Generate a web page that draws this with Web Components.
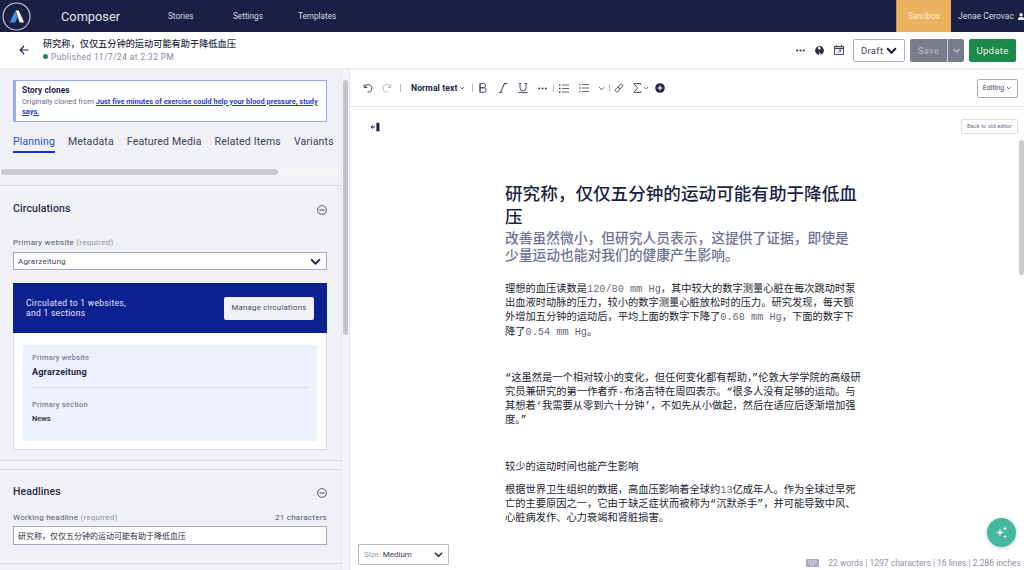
<!DOCTYPE html>
<html lang="zh">
<head>
<meta charset="utf-8">
<title>Composer</title>
<style>
  html, body { margin: 0; height: 100%; overflow: hidden; }
  body { font-family: Roboto, "Noto Sans CJK SC", sans-serif; color: #1a1f44; background: #fff; }
</style>
</head>
<body>
<composer-app></composer-app>
<script>
const CHEVRON = (size, width = 2, color = 'currentColor') => `<svg width="${size}" height="${size}" viewBox="0 0 12 12" fill="none" stroke="${color}" stroke-width="${width}"><path d="M2 4l4 4 4-4"/></svg>`;

class AppTopbar extends HTMLElement {
  constructor() {
    super();
    this.shadowDOM = this.attachShadow({mode: 'open'});
  }

  connectedCallback() {
    this.shadowDOM.innerHTML = `
    <style>
      :host { display: flex; height: 32px; background: #1a1f44; color: #d5d7e2; align-items: center; font-size: 8.2px; }
      .logo { display: block; margin-left: 2px; width: 29px; height: 29px; }
      .brand { margin-left: 30px; width: 107px; font-size: 12.8px; color: #e3e4ec; }
      nav { display: flex; flex: 1; }
      nav span { width: 65px; }
      .sandbox { width: 55px; height: 32px; background: #ebb25f; color: #fbeacf; display: flex; align-items: center; justify-content: center; border-left: 1px solid #c4954f; box-sizing: border-box; }
      .user { display: flex; align-items: center; width: 73px; padding-left: 7px; box-sizing: border-box; gap: 4px; white-space: nowrap; font-size: 8.5px; }
    </style>
    <svg class="logo" viewBox="0 0 29 29">
      <circle cx="14.5" cy="14.5" r="13.5" fill="none" stroke="#c9ccd8" stroke-width="1.1"/>
      <path d="M13.2 8.5L7.6 20.5h5.6l2.2-5z" fill="#3f8fe0"/>
      <path d="M13.6 8.5h3.2l5.4 12h-4.6z" fill="#f2f4f8"/>
    </svg>
    <span class="brand">Composer</span>
    <nav><span>Stories</span><span>Settings</span><span>Templates</span></nav>
    <div class="sandbox">Sandbox</div>
    <div class="user">Jenae Cerovac
      <svg width="8" height="9" viewBox="0 0 8 9" fill="#eceef4"><circle cx="4" cy="2.2" r="2.2"/><path d="M0 9V7.4C0 5.8 1.6 5 4 5s4 .8 4 2.4V9z"/></svg>
    </div>
    `;
  }
}

class StoryHeader extends HTMLElement {
  constructor() {
    super();
    this.shadowDOM = this.attachShadow({mode: 'open'});
  }

  connectedCallback() {
    this.shadowDOM.innerHTML = `
    <style>
      :host { display: flex; height: 36px; background: #fff; align-items: center; border-bottom: 2px solid #eeeff3; }
      .back { margin-left: 19px; width: 24px; display: block; }
      .meta { flex: 1; }
      .title { font-size: 9.2px; font-weight: 500; line-height: 13px; color: #2a2d45; margin-top: -1px; }
      .status { display: flex; align-items: center; font-size: 8.2px; line-height: 12px; color: #84869b; letter-spacing: .5px; margin-top: 1px; }
      .dot { width: 5px; height: 5px; border-radius: 50%; background: #1b8a4b; margin: 0 3px 0 0; }
      .tools { display: flex; align-items: center; padding-right: 8px; }
      .tools svg { display: block; }
      .draft { box-sizing: border-box; margin-left: 9px; width: 52px; height: 23px; border: 1px solid #aeb0c0; border-radius: 2px; display: flex; align-items: center; justify-content: space-between; padding: 0 6px 0 7px; font-size: 9.5px; color: #3e4059; letter-spacing: .3px; }
      .save { margin-left: 5px; height: 23px; display: flex; background: #7a7c8b; border-radius: 2px; color: #b9bac4; font-size: 9.5px; letter-spacing: .3px; }
      .save span { width: 37px; display: flex; align-items: center; justify-content: center; border-right: 1px solid #cfd0d7; }
      .save i { width: 16px; display: flex; align-items: center; justify-content: center; color: #c3c4cd; }
      .update { margin-left: 5px; width: 47px; height: 23px; background: #1b8a4b; color: #e8f4ec; border-radius: 2px; display: flex; align-items: center; justify-content: center; font-size: 9.5px; letter-spacing: .3px; }
    </style>
    <svg class="back" width="24" height="12" viewBox="0 0 24 12" fill="none" stroke="#1a1f44" stroke-width="1.1"><path d="M9.5 6H1.2M5 2L1.2 6 5 10"/></svg>
    <div class="meta">
      <div class="title">研究称，仅仅五分钟的运动可能有助于降低血压</div>
      <div class="status"><span class="dot"></span>Published 11/7/24 at 2:32 PM</div>
    </div>
    <div class="tools">
      <svg width="9" height="3" viewBox="0 0 9 3" fill="#2a2d45"><circle cx="1.2" cy="1.5" r="1.1"/><circle cx="4.5" cy="1.5" r="1.1"/><circle cx="7.8" cy="1.5" r="1.1"/></svg>
      <svg style="margin-left:10px" width="9" height="9" viewBox="0 0 9 9"><circle cx="4.5" cy="4.5" r="4.4" fill="#2a2d45"/><path d="M3.4 0L6 2.2 4.6 3.8 2.9 3zM4.5 6.3l1.2 1L5 9H4z" fill="#fff"/></svg>
      <svg style="margin-left:10px" width="10" height="10" viewBox="0 0 10 10" fill="none" stroke="#3e4059"><rect x=".5" y="1.5" width="9" height="8" stroke-width=".9"/><path d="M.5 3.4h9" stroke-width="1.4"/><path d="M2.5 0v2M7.5 0v2" stroke-width="1"/><path d="M3.5 7.8L6.8 5M5 5h1.8v1.8" stroke-width=".8"/></svg>
      <div class="draft">Draft ${CHEVRON(13, 2, '#1a1f44')}</div>
      <div class="save"><span>Save</span><i>${CHEVRON(9, 1.6)}</i></div>
      <div class="update">Update</div>
    </div>
    `;
  }
}

class CloneNotice extends HTMLElement {
  constructor() {
    super();
    this.shadowDOM = this.attachShadow({mode: 'open'});
  }

  connectedCallback() {
    this.shadowDOM.innerHTML = `
    <style>
      :host { display: block; box-sizing: border-box; height: 42px; margin: 10px 14px 0 13px; background: #fff; border: 1px solid #9cabf2; border-left-width: 3px; padding: 3px 6px 0 6px; font-size: 7.4px; line-height: 9.5px; color: #6b6d82; }
      b { display: block; font-size: 8.3px; line-height: 12px; color: #23264a; font-weight: 700; margin-bottom: 1px; letter-spacing: .1px; }
      a { color: #2c3fd0; font-weight: 700; text-decoration: underline; }
    </style>
    <b>Story clones</b>
    Originally cloned from <a>Just five minutes of exercise could help your blood pressure, study says.</a>
    `;
  }
}

class TabBar extends HTMLElement {
  constructor() {
    super();
    this.shadowDOM = this.attachShadow({mode: 'open'});
  }

  connectedCallback() {
    this.shadowDOM.innerHTML = `
    <style>
      :host { display: flex; margin: 11px 0 0 13px; gap: 13px; font-size: 10.5px; color: #3e4059; white-space: nowrap; letter-spacing: .15px; }
      span { display: block; padding: 2px 0 3px; height: 13px; line-height: 13px; border-bottom: 2px solid transparent; }
      .active { color: #2a50c8; border-bottom-color: #1330d0; }
    </style>
    <span class="active">Planning</span><span>Metadata</span><span>Featured Media</span><span>Related Items</span><span>Variants</span>
    `;
  }
}

class PanelSection extends HTMLElement {
  constructor() {
    super();
    this.shadowDOM = this.attachShadow({mode: 'open'});
  }

  connectedCallback() {
    const title = this.getAttribute('title');
    this.removeAttribute('title');
    this.shadowDOM.innerHTML = `
    <style>
      :host { display: block; border-top: 1px solid #d9dbe4; padding: 15px 14px 0 13px; }
      header { display: flex; justify-content: space-between; align-items: center; height: 14px; font-size: 10.5px; font-weight: 500; color: #2a2d45; letter-spacing: .1px; }
      svg { display: block; margin-top: 4px; }
    </style>
    <header>${title}
      <svg width="10" height="10" viewBox="0 0 10 10" fill="none" stroke="#4a4c63" stroke-width=".9"><circle cx="5" cy="5" r="4.4"/><path d="M2.5 5h5" stroke-width="1.1"/></svg>
    </header>
    <slot></slot>
    `;
  }
}

class FieldLabel extends HTMLElement {
  constructor() {
    super();
    this.shadowDOM = this.attachShadow({mode: 'open'});
  }

  connectedCallback() {
    this.shadowDOM.innerHTML = `
    <style>
      :host { display: flex; justify-content: space-between; font-size: 8px; line-height: 11px; color: #53556b; letter-spacing: .25px; }
      i { font-style: normal; color: #8f91a4; }
    </style>
    <span>${this.getAttribute('text')} <i>(required)</i></span><span>${this.getAttribute('note') || ''}</span>
    `;
  }
}

class CirculationsCard extends HTMLElement {
  constructor() {
    super();
    this.shadowDOM = this.attachShadow({mode: 'open'});
  }

  connectedCallback() {
    this.shadowDOM.innerHTML = `
    <style>
      :host { display: block; margin-top: 13px; background: #fff; border: 1px solid #d8dae4; border-top: 0; height: 167px; box-sizing: border-box; }
      .banner { margin: 0 -1px; height: 50px; box-sizing: border-box; background: #0c2090; color: #e6e9f6; display: flex; align-items: center; justify-content: space-between; padding: 0 13px; font-size: 8.5px; line-height: 10px; letter-spacing: .3px; }
      .banner button { all: unset; box-sizing: border-box; width: 90px; height: 23px; background: #f0f1f6; border-radius: 2px; color: #4a4c63; font-size: 7.8px; text-align: center; letter-spacing: .25px; }
      .inner { margin: 12px 9px 0; height: 96px; box-sizing: border-box; background: #ecf1fd; padding: 8px 9px; }
      .label { font-size: 7.5px; line-height: 10px; font-weight: 500; color: #7b7e99; letter-spacing: .2px; }
      .site { font-size: 9px; font-weight: 700; color: #23264a; line-height: 12px; margin-top: 3px; letter-spacing: .2px; }
      hr { border: 0; border-top: 1px solid #d7dbe8; margin: 9px 0 12px; }
      .news { font-size: 7.5px; font-weight: 700; color: #3e4059; line-height: 10px; margin-top: 4px; }
    </style>
    <div class="banner"><span>Circulated to 1 websites,<br>and 1 sections</span><button>Manage circulations</button></div>
    <div class="inner">
      <div class="label">Primary website</div>
      <div class="site">Agrarzeitung</div>
      <hr>
      <div class="label">Primary section</div>
      <div class="news">News</div>
    </div>
    `;
  }
}

class SidePanel extends HTMLElement {
  constructor() {
    super();
    this.shadowDOM = this.attachShadow({mode: 'open'});
  }

  connectedCallback() {
    this.shadowDOM.innerHTML = `
    <style>
      :host { display: flex; flex: none; width: 350px; height: 500px; background: #f0f1f6; overflow: hidden; border-right: 1px solid #e3e4ea; box-sizing: border-box; }
      .content { width: 341px; flex: none; }
      .track { flex: 1; background: #f3f4f7; border-left: 1px solid #e6e7ec; padding: 10px 1px 0; }
      .track div { height: 255px; background: #c4c5ca; border-radius: 3px; }
      .hscroll { margin-top: 14px; height: 10px; background: #f5f6f8; padding: 2px 0 0 1px; box-sizing: border-box; }
      .hscroll div { width: 277px; height: 6px; background: #c9cad0; border-radius: 3px; }
      .circ { margin-top: 8px; height: 275px; box-sizing: border-box; }
      .select { box-sizing: border-box; margin-top: 4px; height: 18px; background: #fff; border: 1px solid #a9abbd; display: flex; align-items: center; justify-content: space-between; padding: 0 4px; font-size: 8px; color: #3e4059; letter-spacing: .2px; }
      .input { box-sizing: border-box; margin-top: 3px; height: 19px; background: #fff; border: 1px solid #a9abbd; display: flex; align-items: center; padding: 0 4px; font-size: 8px; color: #2a2d45; }
      .spacer { height: 9px; border-top: 1px solid #d9dbe4; box-sizing: border-box; }
      .circ field-label { margin-top: 22px; }
      .head field-label { margin-top: 14px; }
      .head { height: 94px; box-sizing: border-box; padding-top: 14px; }
      .bottom { border-top: 1px solid #d9dbe4; }
    </style>
    <div class="content">
      <clone-notice></clone-notice>
      <tab-bar></tab-bar>
      <div class="hscroll"><div></div></div>
      <panel-section class="circ" title="Circulations">
        <field-label text="Primary website"></field-label>
        <div class="select">Agrarzeitung ${CHEVRON(13, 1.8, '#1a1f44')}</div>
        <circulations-card></circulations-card>
      </panel-section>
      <div class="spacer"></div>
      <panel-section class="head" title="Headlines">
        <field-label text="Working headline" note="21 characters"></field-label>
        <div class="input">研究称，仅仅五分钟的运动可能有助于降低血压</div>
      </panel-section>
      <div class="bottom"></div>
    </div>
    <div class="track"><div></div></div>
    `;
  }
}

class EditorToolbar extends HTMLElement {
  constructor() {
    super();
    this.shadowDOM = this.attachShadow({mode: 'open'});
  }

  connectedCallback() {
    this.shadowDOM.innerHTML = `
    <style>
      :host { display: flex; flex: none; align-items: center; height: 37px; box-sizing: border-box; border-bottom: 1px solid #dfe1ec; padding: 0 6px 0 13px; color: #3e4059; font-size: 8px; }
      svg { display: block; flex: none; }
      .sep { width: 1px; height: 8px; background: #b9bbc8; flex: none; }
      .normal { font-size: 8.6px; font-weight: 700; color: #23264a; letter-spacing: .1px; display: flex; align-items: center; gap: 2px; white-space: nowrap; }
      .editing { margin-left: auto; box-sizing: border-box; width: 41px; height: 19px; border: 1px solid #a9abbd; border-radius: 2px; display: flex; align-items: center; justify-content: center; gap: 2px; font-size: 7px; color: #4a4c63; }
    </style>
    <svg width="10" height="10" viewBox="0 0 10 10" fill="none" stroke="#3e4059"><path d="M1.2 1.5v3h3M1.5 4.5A3.7 3.7 0 1 1 4.5 9"/></svg>
    <svg style="margin-left:9px" width="10" height="10" viewBox="0 0 10 10" fill="none" stroke="#b6b8c4"><path d="M8.8 1.5v3h-3M8.5 4.5A3.7 3.7 0 1 0 5.500 9"/></svg>
    <span class="sep" style="margin:0 10px 0 8px"></span>
    <span class="normal">Normal text ${CHEVRON(6, 1.3)}</span>
    <span class="sep" style="margin:0 6px 0 7px"></span>
    <svg width="8" height="10" viewBox="0 0 8 10" fill="none" stroke="#3e4059" stroke-width=".9"><path d="M1 .6h3.5a2 2 0 0 1 0 4.2H1zM1 4.8h4a2.200 2.200 0 0 1 0 4.500H1zM1 .6v8.700"/></svg>
    <svg style="margin-left:12px" width="9" height="10" viewBox="0 0 9 10" fill="none" stroke="#3e4059"><path d="M8 .6H5M5.500 .6L1.500 9.400" stroke-width="1"/><path d="M.2 9.400h3" stroke-width=".9"/></svg>
    <svg style="margin-left:10px" width="10" height="10" viewBox="0 0 10 10" fill="none" stroke="#3e4059" stroke-width=".9"><path d="M2 .5v4.500a3 3 0 0 0 6 0V.5M.8 .5h2.400M6.800 .5h2.400M.5 9.500h9"/></svg>
    <svg style="margin-left:10px" width="9" height="3" viewBox="0 0 9 3" fill="#3e4059"><circle cx="1.200" cy="1.500" r="1"/><circle cx="4.500" cy="1.500" r="1"/><circle cx="7.800" cy="1.500" r="1"/></svg>
    <span class="sep" style="margin:0 5px 0 6px"></span>
    <svg width="10" height="9" viewBox="0 0 10 9" fill="none" stroke="#3e4059"><path d="M3 1h7M3 4.500h7M3 8h7" stroke-width=".8"/><path d="M0 1h1.500M0 4.500h1.500M0 8h1.500" stroke-width="1.300"/></svg>
    <svg style="margin-left:10px" width="10" height="10" viewBox="0 0 10 10" fill="none" stroke="#3e4059"><path d="M3 1.500h7M3 5h7M3 8.500h7" stroke-width=".8"/><path d="M.8 .5v2M.8 4v2M.8 7.500v2" stroke-width=".8"/></svg>
    <svg style="margin-left:9px" width="7" height="7" viewBox="0 0 12 12" fill="none" stroke="#3e4059" stroke-width="1.600"><path d="M2 4l4 4 4-4"/></svg>
    <span class="sep" style="margin:0 4px 0 4px"></span>
    <svg width="10" height="10" viewBox="0 0 10 10" fill="none" stroke="#5a5c72" stroke-width=".9"><rect x="4.900" y=".8" width="3.300" height="5" rx="1.600" transform="rotate(45 6.500 3.300)"/><rect x="1.800" y="4.200" width="3.300" height="5" rx="1.600" transform="rotate(45 3.500 6.700)"/></svg>
    <svg style="margin-left:9px" width="9" height="10" viewBox="0 0 9 10" fill="none" stroke="#3e4059" stroke-width=".9"><path d="M8 1.800V.6H.8L4.600 5 .8 9.400H8V8.200"/></svg>
    <span style="margin-left:1px;display:flex">${CHEVRON(6, 1.300)}</span>
    <svg style="margin-left:6px" width="10" height="10" viewBox="0 0 10 10"><circle cx="5" cy="5" r="4.800" fill="#23264a"/><path d="M5 2.500v5M2.500 5h5" stroke="#fff" stroke-width="1.200"/></svg>
    <div class="editing">Editing ${CHEVRON(6, 1.300)}</div>
    `;
  }
}

class StoryBody extends HTMLElement {
  constructor() {
    super();
    this.shadowDOM = this.attachShadow({mode: 'open'});
  }

  connectedCallback() {
    this.shadowDOM.innerHTML = `
    <style>
      :host { display: block; box-sizing: border-box; padding: 74px 0 0 155px; width: 510px; font-family: "Liberation Mono", "Noto Sans CJK SC", monospace; font-size: 10.25px; line-height: 14.2px; color: #22242f; white-space: nowrap; }
      h1 { margin: 0 0 2px; font: 500 17.6px/23px "Noto Sans CJK SC", sans-serif; color: #1a1f44; white-space: normal; }
      h2 { margin: 0 0 19px; font: 500 13.76px/17px "Noto Sans CJK SC", sans-serif; color: #6f7296; }
      p { margin: 0; }
      .n { color: #6a6c7a; }
      .gap-l { margin-top: 32px; }
      .gap-xl { margin-top: 32px; }
      .gap-m { margin-top: 9px; }
    </style>
    <h1>研究称，仅仅五分钟的运动可能有助于降低血压</h1>
    <h2>改善虽然微小，但研究人员表示，这提供了证据，即使是<br>少量运动也能对我们的健康产生影响。</h2>
    <p>理想的血压读数是<span class="n">120/80 mm Hg</span>，其中较大的数字测量心脏在每次跳动时泵<br>出血液时动脉的压力，较小的数字测量心脏放松时的压力。研究发现，每天额<br>外增加五分钟的运动后，平均上面的数字下降了<span class="n">0.68 mm Hg</span>，下面的数字下<br>降了<span class="n">0.54 mm Hg</span>。</p>
    <p class="gap-l">“这虽然是一个相对较小的变化，但任何变化都有帮助，”伦敦大学学院的高级研<br>究员兼研究的第一作者乔·布洛吉特在周四表示。“很多人没有足够的运动。与<br>其想着‘我需要从零到六十分钟’，不如先从小做起，然后在适应后逐渐增加强<br>度。”</p>
    <p class="gap-xl">较少的运动时间也能产生影响</p>
    <p class="gap-m">根据世界卫生组织的数据，高血压影响着全球约<span class="n">13</span>亿成年人。作为全球过早死<br>亡的主要原因之一，它由于缺乏症状而被称为“沉默杀手”，并可能导致中风、<br>心脏病发作、心力衰竭和肾脏损害。</p>
    `;
  }
}

class EditorPane extends HTMLElement {
  constructor() {
    super();
    this.shadowDOM = this.attachShadow({mode: 'open'});
  }

  connectedCallback() {
    this.shadowDOM.innerHTML = `
    <style>
      :host { display: flex; flex-direction: column; flex: 1; position: relative; height: 500px; overflow: hidden; background: #fff; }
      .caret { position: absolute; left: 20px; top: 52px; display: block; }
      .old { position: absolute; right: 6px; top: 49px; box-sizing: border-box; width: 57px; height: 15px; border: 1px solid #dcdde5; border-radius: 2px; font-size: 5.8px; line-height: 13px; text-align: center; color: #6b6d82; }
      .bar { position: absolute; right: 0; top: 70px; width: 5px; height: 135px; background: #c9cad0; border-radius: 3px; }
      .size { position: absolute; left: 8px; top: 474px; box-sizing: border-box; width: 91px; height: 21px; background: #fff; border: 1px solid #b9bbc8; border-radius: 1px; display: flex; align-items: center; justify-content: space-between; padding: 0 4px 0 5px; font-size: 8px; color: #3e4059; }
      .size i { font-style: normal; color: #9a9cad; }
      .status { position: absolute; right: 3px; bottom: 0; height: 15px; display: flex; align-items: center; gap: 9px; font-size: 8.5px; color: #8f91a4; white-space: nowrap; background: #fff; padding-left: 4px; }
      .fab { position: absolute; left: 637px; top: 448px; width: 29px; height: 29px; border-radius: 50%; background: #46b89f; box-shadow: 0 1px 4px rgba(0,0,0,.2); display: flex; align-items: center; justify-content: center; }
    </style>
    <editor-toolbar></editor-toolbar>
    <story-body></story-body>
    <svg class="caret" width="10" height="10" viewBox="0 0 10 10"><path d="M5 5H1.500M3 3.500L1 5 3 6.500" fill="none" stroke="#23264a" stroke-width="1"/><rect x="6.400" y=".8" width="3" height="8.500" fill="#1a1f44"/></svg>
    <div class="old">Back to old editor</div>
    <div class="bar"></div>
    <div class="size"><span><i>Size:</i> Medium</span>${CHEVRON(11, 1.5, '#23264a')}</div>
    <div class="fab"><svg width="13" height="13" viewBox="0 0 13 13" fill="#fff"><path d="M5 2.500l1 3 3 1-3 1-1 3-1-3-3-1 3-1z"/><path d="M10 0l.6 1.900 1.900.6-1.900.6-.6 1.900-.6-1.900-1.900-.6 1.900-.6zM10 8.500l.5 1.500 1.500.5-1.500.5-.5 1.500-.5-1.500-1.500-.5 1.500-.5z"/></svg></div>
    <div class="status">
      <svg width="13" height="8" viewBox="0 0 13 8"><rect width="13" height="8" rx="1" fill="#a9abbd"/><path d="M2 2h9M2 4h9M4 6h5" stroke="#fff" stroke-width=".8" stroke-dasharray="1 .7"/></svg>
      <span>22 words | 1297 characters | 16 lines | 2.286 inches</span>
    </div>
    `;
  }
}

class ComposerApp extends HTMLElement {
  constructor() {
    super();
    this.shadowDOM = this.attachShadow({mode: 'open'});
  }

  connectedCallback() {
    this.shadowDOM.innerHTML = `
    <style>
      :host { display: flex; flex-direction: column; width: 1024px; height: 570px; overflow: hidden; }
      main { display: flex; flex: 1; min-height: 0; }
    </style>
    <app-topbar></app-topbar>
    <story-header></story-header>
    <main>
      <side-panel></side-panel>
      <editor-pane></editor-pane>
    </main>
    `;
  }
}

customElements.define('app-topbar', AppTopbar);
customElements.define('story-header', StoryHeader);
customElements.define('clone-notice', CloneNotice);
customElements.define('tab-bar', TabBar);
customElements.define('panel-section', PanelSection);
customElements.define('field-label', FieldLabel);
customElements.define('circulations-card', CirculationsCard);
customElements.define('side-panel', SidePanel);
customElements.define('editor-toolbar', EditorToolbar);
customElements.define('story-body', StoryBody);
customElements.define('editor-pane', EditorPane);
customElements.define('composer-app', ComposerApp);
</script>
</body>
</html>
